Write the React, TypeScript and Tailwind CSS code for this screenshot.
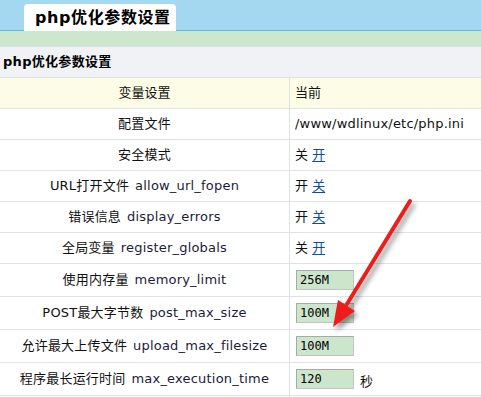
import React from "react";

type Row = {
  label: string;
  name?: string;
  kind: "text" | "toggle" | "input";
  value?: string;
  on?: boolean;
  unit?: string;
};

const rows: Row[] = [
  { label: "配置文件", kind: "text", value: "/www/wdlinux/etc/php.ini" },
  { label: "安全模式", kind: "toggle", on: false },
  { label: "URL打开文件", name: "allow_url_fopen", kind: "toggle", on: true },
  { label: "错误信息", name: "display_errors", kind: "toggle", on: true },
  { label: "全局变量", name: "register_globals", kind: "toggle", on: false },
  { label: "使用内存量", name: "memory_limit", kind: "input", value: "256M" },
  { label: "POST最大字节数", name: "post_max_size", kind: "input", value: "100M" },
  { label: "允许最大上传文件", name: "upload_max_filesize", kind: "input", value: "100M" },
  { label: "程序最长运行时间", name: "max_execution_time", kind: "input", value: "120", unit: "秒" },
];

const font = "font-['DejaVu_Sans','Noto_Sans_CJK_SC',sans-serif]";

function Toggle({ on }: { on?: boolean }) {
  // current state is plain text, the other one is a link
  return on ? (
    <span>
      开 <a className="text-[#0c4ea2] underline underline-offset-2">关</a>
    </span>
  ) : (
    <span>
      关 <a className="text-[#0c4ea2] underline underline-offset-2">开</a>
    </span>
  );
}

function Arrow() {
  return (
    <svg className="absolute left-0 top-0 pointer-events-none" width="481" height="397">
      <defs>
        <filter id="sh" x="-50%" y="-50%" width="200%" height="200%">
          <feDropShadow dx="3" dy="4" stdDeviation="2.5" floodColor="#000" floodOpacity="0.4" />
        </filter>
      </defs>
      <g filter="url(#sh)">
        <line x1="410" y1="201" x2="347" y2="304" stroke="#ee1c1c" strokeWidth="4" strokeLinecap="round" />
        <polygon points="333,327 338,300 355,311" fill="#ee1c1c" />
      </g>
    </svg>
  );
}

export default function App() {
  return (
    <div className={`relative w-[481px] h-[397px] overflow-hidden bg-white text-[13px] text-[#111] ${font}`}>
      <div className="h-[31px] bg-[#a3d8f0] shadow-[inset_0_-1px_0_#5fb9e8] flex items-end pl-[24px]">
        <div className="w-[152px] h-[27px] bg-white rounded-t-[4px] flex items-center pl-[11px] text-[16px] font-bold tracking-[0.6px] text-black">
          php优化参数设置
        </div>
      </div>
      <div className="h-[15px] bg-[#cce7cc]" />
      <div className="h-[31px] border-t border-[#dcdfe6] bg-[#f1f2f5] flex items-center pl-[3px] font-bold tracking-[0.3px] text-black">
        php优化参数设置
      </div>
      <div className="flex border-t border-[#dfe2e9] h-[31px] bg-[#fdfce7]">
        <div className="w-[290px] border-r border-[#dfe2e9] flex items-center justify-center">变量设置</div>
        <div className="flex-1 flex items-center pl-[5px]">当前</div>
      </div>
      {rows.map((r) => (
        <div
          key={r.label}
          className={`flex border-t border-[#dfe2e9] ${r.kind === "input" ? "h-[33px]" : "h-[31px]"}`}
        >
          <div className="w-[290px] border-r border-[#dfe2e9] flex items-center justify-center gap-[6px] tracking-[0.2px]">
            <span>{r.label}</span>
            {r.name && <span className="text-[#1c1c3a]">{r.name}</span>}
          </div>
          <div className="flex-1 flex items-center pl-[5px]">
            {r.kind === "text" && <span className="tracking-[0.2px]">{r.value}</span>}
            {r.kind === "toggle" && <Toggle on={r.on} />}
            {r.kind === "input" && (
              <>
                <input
                  readOnly
                  value={r.value}
                  className="ml-px w-[58px] h-[20px] bg-[#cce6cc] border border-[#c3c3c3] border-t-[#a9a9a9] border-l-[#a9a9a9] pl-[3px] text-[12px] font-['DejaVu_Sans_Mono',monospace] text-black outline-none"
                />
                {r.unit && <span className="ml-[6px] mt-[6px]">{r.unit}</span>}
              </>
            )}
          </div>
        </div>
      ))}
      <div className="border-t border-[#dfe2e9] flex h-[10px]">
        <div className="w-[290px] border-r border-[#dfe2e9]" />
      </div>
      <Arrow />
    </div>
  );
}
